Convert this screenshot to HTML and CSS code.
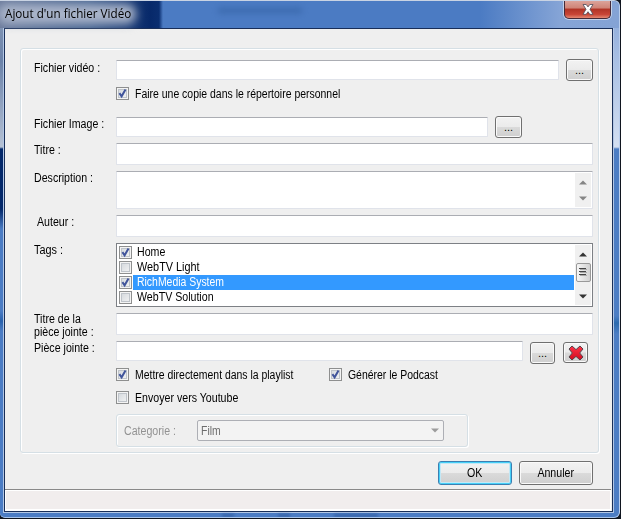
FILE: index.html
```html
<!DOCTYPE html>
<html lang="fr">
<head>
<meta charset="utf-8">
<title>Ajout d'un fichier Vidéo</title>
<link rel="stylesheet" href="styles.css">
</head>
<body>
<svg class="defs" width="0" height="0"><defs>
<g id="check"><path d="M3.4 6.2 5.6 9.3 9.5 2.6" fill="none" stroke="#40549b" stroke-width="2"/></g>
<linearGradient id="red" x1="0" y1="0" x2="0" y2="1"><stop offset="0" stop-color="#ff3347"/><stop offset="1" stop-color="#cf0c20"/></linearGradient>
</defs></svg>
<div class="window">
  <header class="titlebar">
    <h1 class="title"><span>Ajout d'un fichier Vidéo</span></h1>
    <i class="ghost"></i>
    <button class="close" aria-label="Fermer"><svg width="12" height="11" viewBox="0 0 12 11"><path d="M1 .5h3.2L6 2.9 7.8.5H11L8 5.3l3 5H7.8L6 7.7l-1.8 2.6H1l3-5z" fill="#fff" stroke="#4b4a58" stroke-width=".8"/></svg></button>
  </header>
  <main class="client">
    <form class="group">
      <div class="row r1"><label><span class="t">Fichier vidéo :</span></label><div class="input w1"></div><button type="button" class="btn browse b1">...</button></div>
      <div class="row r2"><label></label><i class="cb"><svg width="13" height="13"><use href="#check"/></svg></i><span class="t cap">Faire une copie dans le répertoire personnel</span></div>
      <div class="row r3"><label><span class="t">Fichier Image :</span></label><div class="input w2"></div><button type="button" class="btn browse b2">...</button></div>
      <div class="row r4"><label><span class="t">Titre :</span></label><div class="input full"></div></div>
      <div class="row r5"><label><span class="t">Description :</span></label><div class="input full area"><div class="scroll"><svg width="8" height="5"><path d="M0 4.5 4 .5 8 4.5z" fill="#858585"/></svg><svg width="8" height="5"><path d="M0 .5 4 4.5 8 .5z" fill="#858585"/></svg></div></div></div>
      <div class="row r6"><label class="indent"><span class="t">Auteur :</span></label><div class="input full"></div></div>
      <div class="row r7"><label><span class="t wide">Tags :</span></label>
        <div class="list">
          <ul>
            <li><i class="cb"><svg width="13" height="13"><use href="#check"/></svg></i><b><span class="t">Home</span></b></li>
            <li><i class="cb"></i><b><span class="t wide">WebTV Light</span></b></li>
            <li class="sel"><i class="cb"><svg width="13" height="13"><use href="#check"/></svg></i><b><span class="t narrow">RichMedia System</span></b></li>
            <li><i class="cb"></i><b><span class="t">WebTV Solution</span></b></li>
          </ul>
          <div class="scroll"><svg width="8" height="5"><path d="M0 4.5 4 .5 8 4.5z" fill="#333"/></svg><i class="thumb"><svg width="8" height="9"><path d="M0 .5h7M0 3.5h7M0 6.5h7" stroke="#444"/><path d="M1 1.5h7M1 4.5h7M1 7.5h7" stroke="#aaa"/></svg></i><svg width="8" height="5"><path d="M0 .5 4 4.5 8 .5z" fill="#333"/></svg></div>
        </div></div>
      <div class="row r8"><label class="two"><span class="t">Titre de la</span><span class="t">pièce jointe :</span></label><div class="input full"></div></div>
      <div class="row r9"><label><span class="t">Pièce jointe :</span></label><div class="input w3"></div><button type="button" class="btn browse b3">...</button><button type="button" class="btn del" aria-label="Supprimer"><svg width="18" height="16" viewBox="0 0 18 16"><path d="M5 1 9 4.6 13 1 16 4 12.7 8 16 12l-3 3L9 11.4 5 15l-3-3 3.3-4L2 4z" fill="url(#red)" stroke="#56454c" stroke-width="1" stroke-linejoin="round"/></svg></button></div>
      <div class="row r10"><label></label><i class="cb"><svg width="13" height="13"><use href="#check"/></svg></i><span class="cap first"><span class="t narrow">Mettre directement dans la playlist</span></span><i class="cb"><svg width="13" height="13"><use href="#check"/></svg></i><span class="t cap narrow">Générer le Podcast</span></div>
      <div class="row r11"><label></label><i class="cb"></i><span class="t cap">Envoyer vers Youtube</span></div>
      <div class="row r12"><label></label><div class="category"><div class="cat"><span class="t">Categorie :</span></div><div class="select"><span class="t narrow">Film</span><svg width="8" height="5"><path d="M0 .5h8L4 4.5z" fill="#9c9c9c"/></svg></div></div></div>
    </form>
    <div class="actions"><button class="btn ok"><span class="t">OK</span></button><button class="btn"><span class="t">Annuler</span></button></div>
    <footer class="status"></footer>
  </main>
  <div class="underside"><i></i><i></i><i></i></div>
</div>
</body>
</html>
```
FILE: styles.css
```css
* { box-sizing: border-box; }
body { margin: 0; width: 621px; height: 519px; overflow: hidden; background: #10151f; font: 12px/14px "Liberation Sans", Arial, sans-serif; color: #000; }
.defs { display: block; position: absolute; }
button { font: inherit; color: inherit; padding: 0; margin: 0; }
.window { width: 620px; height: 518px; padding: 0 6px 0 4px; overflow: hidden; border-top: 1px solid #c9d3e3; border-right: 1px solid #b9cdec; border-bottom: 1px solid #a9c4ea; border-radius: 0 6px 6px 5px;
  background: linear-gradient(#8b9db8 0, #6c83aa 60px, #b5c1d4 146px, #03286a 148px, #03286a 208px, #4b7cc4 228px, #4b7cc4 310px, #2a62ad 320px, #4b7cc4 330px) left / 5px 100% no-repeat,
  linear-gradient(#86a5d7 0, #a9c0e4 60px, #d4dff1 146px, #4c7dc4 148px, #4c7dc4 315px, #2b6aae 322px, #4c7dc4 333px) right / 7px 100% no-repeat, #4b7cc4; }
.titlebar { position: relative; display: flex; align-items: flex-start; height: 27px; margin: 0 -6px 0 -4px; background: linear-gradient(90deg, #6b7b9c 0, #42608e 90px, #07296a 150px, #0a2e70 159px, #4b7bc3 163px, #4b7bc3 480px, #85a4d6 560px, #84a3d5); border-top-right-radius: 5px; }
.title { position: relative; margin: 3px 0 0 0; padding: 0 5px; width: 139px; height: 20px; font: 12px/19px "Open Sans", sans-serif; white-space: nowrap; }
.title::before { content: ""; position: absolute; inset: 0 3px 0 -2px; border-radius: 9px; background: #a9b4c9; filter: blur(5px); }
.title span { position: relative; display: inline-block; transform-origin: left; transform: scaleX(.972); }
.ghost { width: 84px; height: 5px; margin: 7px 0 0 79px; background: #315e9f; filter: blur(3px); opacity: .65; }
.close { width: 47px; height: 19px; margin: -1px 8px 0 auto; border: 1px solid #442a38; border-top: 0; border-radius: 0 0 5px 5px; box-shadow: 0 0 0 1px #c4d2e8; background: linear-gradient(#dda89f 0, #cf8376 45%, #b03426 50%, #c84536 80%, #e48872); display: flex; align-items: center; justify-content: center; outline: 0; }
.client { height: 484px; border: 1px solid #182e58; background: #efefef; box-shadow: 0 0 0 1px #b3c7e5; display: flex; flex-direction: column; }
.group { margin: 19px 0 0 15px; width: 579px; height: 405px; flex: none; border: 1px solid #d5dfe5; border-radius: 3px; box-shadow: inset 1px 1px #fff, 1px 1px #fff; padding: 11px 0 0 13px; }
.row { display: flex; align-items: flex-start; white-space: nowrap; }
.row label { flex: none; width: 82px; }
.t { display: inline-block; transform-origin: left; transform: scaleX(.885); }
.narrow { transform: scaleX(.87); }
.wide { transform: scaleX(.905); }
.r2 .t { transform: scaleX(.872); }
.r1 { height: 27px; } .r1 label { padding-top: 1px; }
.r2 { height: 30px; } .r3 { height: 26px; } .r4, .r6, .r8 { height: 28px; }
.r5 { height: 44px; } .r7 { height: 70px; } .r9 { height: 27px; } .r10, .r11 { height: 23px; }
.row .indent { padding-left: 3px; }
.two .t { display: block; line-height: 13px; }
.input { height: 20px; background: #fff; border: 1px solid #e0e3ea; border-top-color: #abadb3; border-radius: 1px; flex: none; }
.w1 { width: 443px; } .w2 { width: 372px; } .w3 { width: 407px; }
.full { width: 477px; height: 22px; }
.area { height: 38px; padding: 1px; display: flex; justify-content: flex-end; }
.scroll { width: 16px; background: #f0f0f0; display: flex; flex-direction: column; justify-content: space-between; align-items: center; padding: 7px 0 6px; }
.btn { border: 1px solid #707070; border-radius: 3px; box-shadow: inset 0 0 0 1px #fafafa; background: linear-gradient(#f2f2f2 0, #ebebeb 49%, #dadada 51%, #cfcfcf); }
.browse { width: 27px; height: 22px; font-size: 11px; line-height: 19px; flex: none; }
.b1 { margin: -1px 0 0 7px; } .b2 { margin: -1px 0 0 7px; } .b3 { margin: 1px 8px 0 7px; width: 25px; }
.del { width: 25px; height: 21px; margin-top: 1px; display: flex; align-items: center; justify-content: center; }
.cb { flex: none; width: 13px; height: 13px; border: 1px solid #8e8f8f; box-shadow: inset 0 0 0 1px #f4f4f4, inset 0 0 0 2px #bfc4ca; background: linear-gradient(135deg, #d0d5da, #f6f6f6); display: flex; }
.cb svg { flex: none; margin: -1px; }
.cap { margin-left: 6px; }
.first { width: 194px; }
.list { width: 477px; height: 64px; border: 1px solid #7d8085; background: #fff; display: flex; padding: 1px 1px 1px 0; }
.list ul { list-style: none; margin: 0 1px 0 0; padding: 0 0 0 2px; flex: 1; }
.list li { display: flex; height: 15px; align-items: center; }
.list b { font-weight: normal; flex: 1; height: 15px; margin-left: 1px; padding-left: 4px; line-height: 15px; }
.sel b { background: #3399ff; color: #fff; }
.thumb { width: 15px; height: 19px; border: 1px solid #999; border-radius: 2px; background: linear-gradient(90deg, #f6f6f6, #d2d2d2); display: flex; align-items: center; justify-content: center; margin-bottom: 7px; }
.category { width: 352px; height: 33px; border: 1px solid #d5dfe5; border-radius: 3px; box-shadow: inset 1px 1px #fff, 1px 1px #fff; display: flex; padding: 5px 0 0 7px; color: #929292; }
.cat { width: 73px; padding-top: 4px; }
.select { width: 247px; height: 21px; border: 1px solid #adafb5; border-radius: 2px; background: #f3f3f3; color: #6d6d6d; display: flex; align-items: center; justify-content: space-between; padding: 0 4px 0 3px; }
.actions { display: flex; gap: 7px; justify-content: flex-end; padding: 8px 19px 0 0; }
.actions .btn { width: 74px; height: 24px; }
.actions .t { transform-origin: center; }
.actions .ok { border-color: #3c7fb1; box-shadow: inset 0 0 0 1px #45d0f8, inset 0 0 0 2px #c3e8f6; }
.status { margin: auto 1px 0 0; height: 22px; border-top: 1px solid #898989; border-bottom: 2px solid #fff; box-shadow: inset 0 1px #fff, inset 1px 0 #fff, inset -1px 0 #fff; background: #f1eded; }
.underside { display: flex; gap: 44px; padding: 2px 0 0 218px; }
.underside i { width: 12px; height: 3px; background: #2c579b; filter: blur(1.5px); opacity: .7; }
.underside i:last-child { width: 44px; }
```
